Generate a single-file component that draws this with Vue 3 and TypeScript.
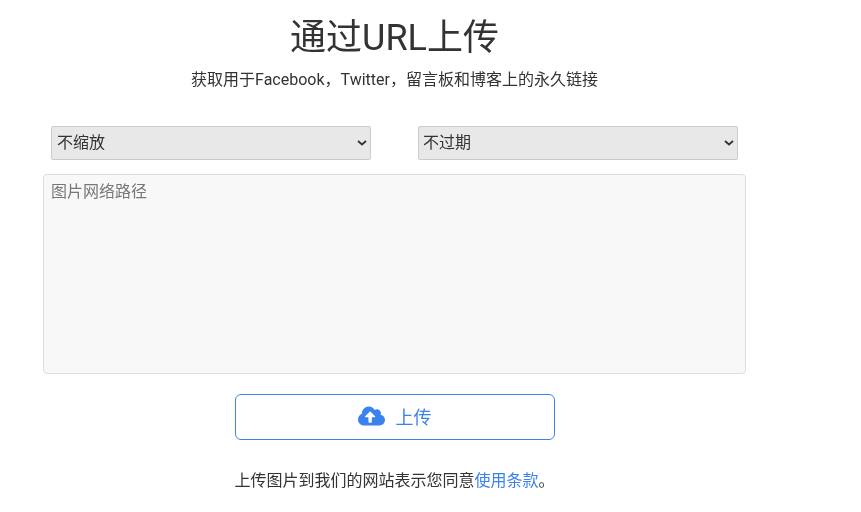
<script setup lang="ts">
const scaleOptions: string[] = ['不缩放']
const expireOptions: string[] = ['不过期']
</script>

<template>
  <main class="page">
    <h1 class="title">通过URL上传</h1>
    <p class="subtitle">获取用于Facebook，Twitter，留言板和博客上的永久链接</p>
    <div class="selects">
      <select class="select">
        <option v-for="o in scaleOptions" :key="o">{{ o }}</option>
      </select>
      <select class="select">
        <option v-for="o in expireOptions" :key="o">{{ o }}</option>
      </select>
    </div>
    <textarea class="urls" placeholder="图片网络路径"></textarea>
    <button class="upload" type="button">
      <svg class="icon" viewBox="0 0 640 512" aria-hidden="true">
        <path fill="currentColor" d="M537.6 226.6c4.1-10.7 6.4-22.4 6.4-34.6 0-53-43-96-96-96-19.7 0-38.1 6-53.3 16.2C367 64.2 315.3 32 256 32c-88.4 0-160 71.6-160 160 0 2.7.1 5.4.2 8.1C40.2 219.8 0 273.2 0 336c0 79.5 64.5 144 144 144h368c70.7 0 128-57.3 128-128 0-61.9-44-113.6-102.4-125.4zM393.4 288H328v112c0 8.8-7.2 16-16 16h-48c-8.8 0-16-7.2-16-16V288h-65.4c-14.3 0-21.4-17.2-11.3-27.3l105.4-105.4c6.2-6.2 16.4-6.2 22.6 0l105.4 105.4c10.1 10.1 2.9 27.3-11.3 27.3z" />
      </svg>
      <span>上传</span>
    </button>
    <p class="terms">上传图片到我们的网站表示您同意<a class="link" href="#">使用条款</a>。</p>
  </main>
</template>

<style>
html, body { background: #fff; }
</style>

<style scoped>
.page {
  box-sizing: border-box;
  width: 789px;
  height: 512px;
  padding: 0 43px;
  display: flex;
  flex-direction: column;
  align-items: center;
  font-family: Roboto, "Noto Sans CJK SC", sans-serif;
  font-size: 16px;
  line-height: 24px;
  color: #333;
  will-change: transform;
}
.title {
  margin: 17px 0 0;
  font-size: 36px;
  line-height: 43px;
  font-weight: 400;
}
.subtitle {
  margin: 8px 0 0;
}
.selects {
  margin-top: 34px;
  display: flex;
  gap: 47px;
}
.select {
  box-sizing: border-box;
  width: 320px;
  height: 34px;
  padding: 0 20px 0 5px;
  appearance: none;
  background: #e8e8e8 url("data:image/svg+xml,%3Csvg xmlns='http://www.w3.org/2000/svg' width='10' height='6' viewBox='0 0 10 6'%3E%3Cpath d='M1 1l4 3.500 4-3.500' fill='none' stroke='%23333' stroke-width='1.800'/%3E%3C/svg%3E") no-repeat right 3px center;
  border: 1px solid #ccc;
  border-radius: 2px;
  font: inherit;
  color: #333;
}
.select:last-child {
  padding-left: 4px;
}
.urls {
  box-sizing: border-box;
  display: block;
  width: 703px;
  height: 200px;
  margin-top: 14px;
  padding: 5px 7px;
  background: #f8f8f8;
  border: 1px solid #ddd;
  border-radius: 4px;
  font: inherit;
  color: #333;
  resize: none;
  outline: none;
}
.urls::placeholder {
  color: #777;
  opacity: 1;
}
.upload {
  box-sizing: border-box;
  width: 320px;
  height: 46px;
  margin-top: 20px;
  padding: 0 0 2px;
  display: flex;
  align-items: center;
  justify-content: center;
  gap: 11px;
  background: #fff;
  border: 1px solid #3b82ec;
  border-radius: 6px;
  font-family: inherit;
  font-size: 18px;
  color: #3b82ec;
}
.icon {
  width: 27px;
  height: 22px;
}
.terms {
  margin: 29px 0 0;
}
.link {
  color: #3b82ec;
  text-decoration: none;
}
</style>
